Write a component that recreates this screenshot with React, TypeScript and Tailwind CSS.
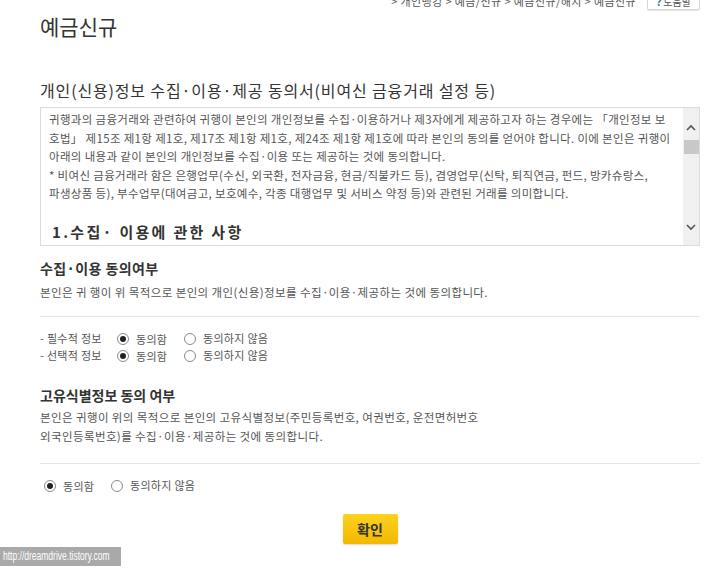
import React from "react";

const font = { fontFamily: '"Noto Sans CJK KR", "Noto Sans", sans-serif' };

function Radio({ checked }: { checked?: boolean }) {
  return (
    <span className="inline-flex h-[12px] w-[12px] items-center justify-center rounded-full border border-[#8a8a8a] bg-white">
      {checked && <span className="h-[6px] w-[6px] rounded-full bg-[#222]" />}
    </span>
  );
}

function Option({ checked, label }: { checked?: boolean; label: string }) {
  return (
    <span className="inline-flex items-center gap-[7px]">
      <Radio checked={checked} />
      <span className="tracking-[0.3px]">{label}</span>
    </span>
  );
}

export default function App() {
  const boxLines = [
    "귀행과의 금융거래와 관련하여 귀행이 본인의 개인정보를 수집·이용하거나 제3자에게 제공하고자 하는 경우에는 「개인정보 보",
    "호법」 제15조 제1항 제1호, 제17조 제1항 제1호, 제24조 제1항 제1호에 따라 본인의 동의를 얻어야 합니다. 이에 본인은 귀행이",
    "아래의 내용과 같이 본인의 개인정보를 수집·이용 또는 제공하는 것에 동의합니다.",
    "* 비여신 금융거래라 함은 은행업무(수신, 외국환, 전자금융, 현금/직불카드 등), 겸영업무(신탁, 퇴직연금, 펀드, 방카슈랑스,",
    "파생상품 등), 부수업무(대여금고, 보호예수, 각종 대행업무 및 서비스 약정 등)와 관련된 거래를 의미합니다.",
  ];
  return (
    <div className="relative h-[569px] w-[720px] overflow-hidden bg-white text-[#444]" style={font}>
      <div className="pl-[40px] pr-[20px]">
        {/* breadcrumb */}
        <div className="-mt-[7px] flex h-[17px] items-center justify-end gap-[11px] text-[11px] text-[#555]">
          <span className="whitespace-nowrap tracking-[0.4px]">&gt; 개인뱅킹 &gt; 예금/신규 &gt; 예금신규/해지 &gt; 예금신규</span>
          <span className="flex h-[17px] w-[53px] items-center justify-center gap-[2px] rounded-[2px] border border-[#d5d5d5] bg-white text-[10px] text-[#555] shadow-[0_1px_1px_rgba(0,0,0,0.1)]">
            <span className="font-bold text-[#2a6dc0]">?</span>도움말
          </span>
        </div>

        <div className="mt-[2px] h-[28px] text-[21px] leading-[28px] text-[#333]">예금신규</div>

        <div className="mt-[40px] h-[20px] whitespace-nowrap text-[16px] leading-[20px] tracking-[0.85px] text-[#333]">
          개인(신용)정보 수집·이용·제공 동의서(비여신 금융거래 설정 등)
        </div>

        <div className="mt-[7px] flex h-[139px] border border-[#dcdcdc] bg-white">
          <div className="flex-1 overflow-hidden pl-[8px] pt-[2px] text-[11.5px] leading-[18.5px] text-[#555]">
            {boxLines.map((l, i) => (
              <div key={i} className="whitespace-nowrap tracking-[0.33px]">{l}</div>
            ))}
            <div className="ml-[3px] mt-[19px] h-[20px] whitespace-nowrap text-[15px] font-bold leading-[20px] tracking-[2.3px] text-[#333]">
              1.수집· 이용에 관한 사항
            </div>
          </div>
          <div className="flex w-[16px] flex-col items-center bg-[#f0f0f0]">
            <svg className="mt-[16px]" width="10" height="7" viewBox="0 0 10 7">
              <path d="M1 6 L5 2 L9 6" fill="none" stroke="#555" strokeWidth="1.6" />
            </svg>
            <div className="mt-[9px] h-[14px] w-[15px] bg-[#c8c8c8]" />
            <div className="flex-1" />
            <svg className="mb-[14px]" width="10" height="7" viewBox="0 0 10 7">
              <path d="M1 1 L5 5 L9 1" fill="none" stroke="#555" strokeWidth="1.6" />
            </svg>
          </div>
        </div>

        <div className="mt-[12px] h-[20px] text-[14px] font-bold leading-[20px] tracking-[0.4px] text-[#333]">수집·이용 동의여부</div>
        <div className="mt-[5px] h-[18px] whitespace-nowrap text-[11.5px] leading-[18px] tracking-[0.4px] text-[#555]">
          본인은 귀 행이 위 목적으로 본인의 개인(신용)정보를 수집·이용·제공하는 것에 동의합니다.
        </div>
        <div className="mt-[15px] h-px bg-[#e6e6e6]" />

        <div className="mt-[13px] text-[11px] text-[#555]">
          <div className="flex h-[17px] items-center">
            <span className="w-[77px] tracking-[0.3px]">- 필수적 정보</span>
            <span className="w-[67px]"><Option checked label="동의함" /></span>
            <Option label="동의하지 않음" />
          </div>
          <div className="flex h-[17px] items-center">
            <span className="w-[77px] tracking-[0.3px]">- 선택적 정보</span>
            <span className="w-[67px]"><Option checked label="동의함" /></span>
            <Option label="동의하지 않음" />
          </div>
        </div>

        <div className="mt-[21px] h-[20px] text-[14px] font-bold leading-[20px] text-[#333]">고유식별정보 동의 여부</div>
        <div className="mt-[3px] text-[11.5px] leading-[19px] tracking-[0.4px] text-[#555]">
          <div className="whitespace-nowrap">본인은 귀행이 위의 목적으로 본인의 고유식별정보(주민등록번호, 여권번호, 운전면허번호</div>
          <div className="whitespace-nowrap">외국인등록번호)를 수집·이용·제공하는 것에 동의합니다.</div>
        </div>
        <div className="mt-[17px] h-px bg-[#e6e6e6]" />

        <div className="ml-[4px] mt-[13px] flex h-[17px] items-center text-[11px] text-[#555]">
          <span className="w-[67px]"><Option checked label="동의함" /></span>
          <Option label="동의하지 않음" />
        </div>

        <div className="mt-[20px] flex justify-center">
          <button className="h-[30px] w-[55px] rounded-[2px] bg-gradient-to-b from-[#fcd21c] to-[#f2b800] text-[14px] font-bold text-[#333] shadow-[0_1px_2px_rgba(0,0,0,0.15)]">
            확인
          </button>
        </div>
      </div>

      <div className="absolute bottom-[3px] left-0 flex h-[19px] w-[121px] items-center overflow-hidden bg-[#a9a9a9] pl-[3px] text-[12.5px] text-white" style={{ fontFamily: '"Liberation Sans", Arial, sans-serif' }}>
        <span className="inline-block origin-left scale-x-[0.68] whitespace-nowrap">http://dreamdrive.tistory.com</span>
      </div>
    </div>
  );
}
